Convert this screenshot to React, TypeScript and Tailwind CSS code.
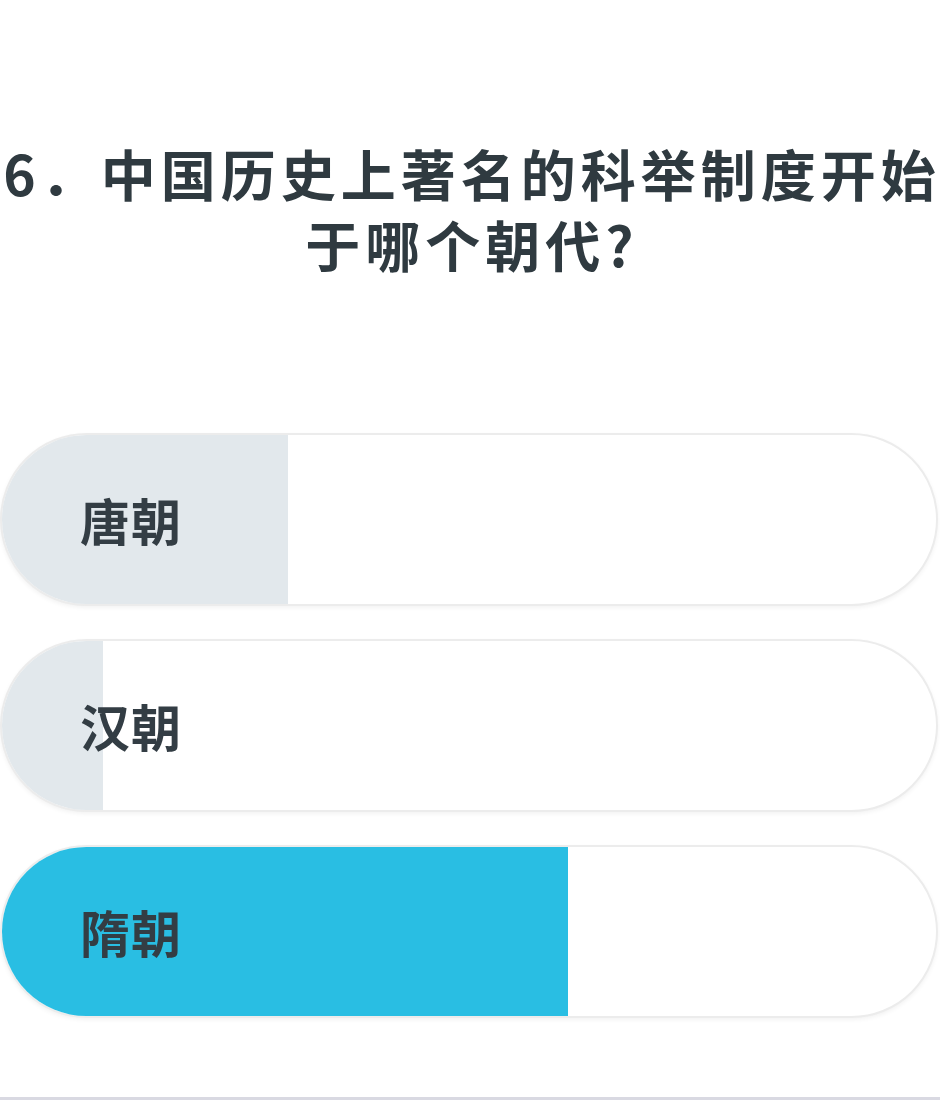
import React from 'react';

interface Option {
  label: string;
  fill: number;
  color: string;
}

const OPTIONS: Option[] = [
  { label: '唐朝', fill: 286, color: 'bg-[#e2e8ec]' },
  { label: '汉朝', fill: 101, color: 'bg-[#e2e8ec]' },
  { label: '隋朝', fill: 566, color: 'bg-[#29bee3]' },
];

const FONT = { fontFamily: '"Noto Sans CJK SC", "Noto Sans", sans-serif' };

export default function App() {
  return (
    <div className="w-[940px] h-[1100px] bg-white overflow-hidden flex flex-col" style={FONT}>
      {/* Question */}
      <div className="w-[944px] pt-[137px] text-center whitespace-nowrap text-[55px] leading-[71px] font-bold tracking-[5px] text-[#2f3a40]">
        6．中国历史上著名的科举制度开始
        <br />
        于哪个朝代?
      </div>

      {/* Options */}
      <div className="mt-[154px] flex flex-col gap-[33px]">
        {OPTIONS.map(opt => (
          <div
            key={opt.label}
            className="relative w-[938px] h-[173px] rounded-full overflow-hidden bg-white border-2 border-[#ececec] shadow-[0_2px_4px_rgba(0,0,0,0.05)] flex items-center"
          >
            <div className={`absolute inset-y-0 left-0 ${opt.color}`} style={{ width: opt.fill }} />
            <span className="relative pl-[78px] text-[50px] font-bold tracking-[1px] text-[#333d44]">
              {opt.label}
            </span>
          </div>
        ))}
      </div>

      <div className="mt-auto h-[3px] bg-[#d9d9e2]" />
    </div>
  );
}
